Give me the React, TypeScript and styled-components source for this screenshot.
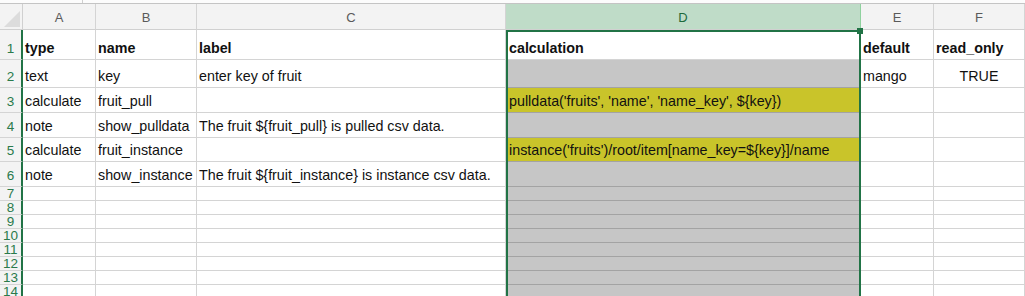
import styled, { createGlobalStyle } from "styled-components"

const GlobalStyle = createGlobalStyle`
  html, body { margin: 0; padding: 0; background: #ffffff; }
  body { font-family: "Liberation Sans", Arial, sans-serif; }
`

const GREEN = "#217346"
const WIDTHS = [23, 73, 101, 309, 355, 73, 91]
const SEL_COL = 4
const TEMPLATE = WIDTHS.map(w => `${w}px`).join(" ")

type Fill = "none" | "gray" | "yellow"

type RowData = { h: number; cells: string[]; bold?: boolean; fill?: Fill }

const rows: RowData[] = [
    { h: 30, bold: true, cells: ["type", "name", "label", "calculation", "default", "read_only"] },
    { h: 28, fill: "gray", cells: ["text", "key", "enter key of fruit", "", "mango", "TRUE"] },
    { h: 25, fill: "yellow", cells: ["calculate", "fruit_pull", "", "pulldata('fruits', 'name', 'name_key', ${key})", "", ""] },
    { h: 25, fill: "gray", cells: ["note", "show_pulldata", "The fruit ${fruit_pull} is pulled csv data.", "", "", ""] },
    { h: 24, fill: "yellow", cells: ["calculate", "fruit_instance", "", "instance('fruits')/root/item[name_key=${key}]/name", "", ""] },
    { h: 25, fill: "gray", cells: ["note", "show_instance", "The fruit ${fruit_instance} is instance csv data.", "", "", ""] },
    ...Array.from({ length: 8 }, () => ({ h: 14, fill: "gray" as Fill, cells: ["", "", "", "", "", ""] })),
]

export default function App() {
    const selLeft = WIDTHS.slice(0, SEL_COL).reduce((a, b) => a + b, 0)
    return (
        <>
            <GlobalStyle />
            <TopStrip>
                <StripDivider />
            </TopStrip>
            <Sheet>
                <Row $h={26}>
                    <Corner>
                        <svg width="16" height="16" viewBox="0 0 16 16">
                            <path d="M16 0 L16 16 L0 16 Z" fill="#dcdcdc" />
                        </svg>
                    </Corner>
                    {["A", "B", "C", "D", "E", "F"].map((l, i) => (
                        <ColHead key={l} $sel={i + 1 === SEL_COL}>{l}</ColHead>
                    ))}
                </Row>
                {rows.map((r, ri) => (
                    <Row key={ri} $h={r.h}>
                        <RowHead $small={r.h < 20}>{ri + 1}</RowHead>
                        {r.cells.map((c, ci) => {
                            const isSel = ci + 1 === SEL_COL
                            return (
                                <Cell
                                    key={ci}
                                    $bold={r.bold}
                                    $center={c === "TRUE"}
                                    $fill={isSel ? r.fill ?? "none" : "none"}
                                    $sel={isSel}
                                >
                                    {c}
                                </Cell>
                            )
                        })}
                    </Row>
                ))}
                <Selection style={{ left: selLeft, width: WIDTHS[SEL_COL] }}>
                    <Handle />
                </Selection>
            </Sheet>
        </>
    )
}

const TopStrip = styled.div`
    height: 3px;
    background: #fcfcfc;
    border-bottom: 1px solid #c4c4c4;
    position: relative;
`
const StripDivider = styled.div`
    position: absolute;
    left: 82px;
    top: 0;
    width: 1px;
    height: 3px;
    background: #cfcfcf;
`
const Sheet = styled.div`
    position: relative;
    width: 1025px;
    height: 292px;
    overflow: hidden;
`
const Row = styled.div<{ $h: number }>`
    display: grid;
    grid-template-columns: ${TEMPLATE};
    height: ${({ $h }) => $h}px;
`
const Corner = styled.div`
    background: #f3f3f3;
    border-right: 1px solid #d0d0d0;
    border-bottom: 1px solid #d0d0d0;
    display: flex;
    align-items: flex-end;
    justify-content: flex-end;
    padding: 0 2px 2px 0;
`
const ColHead = styled.div<{ $sel?: boolean }>`
    background: ${({ $sel }) => $sel ? "#bfdcc8" : "#f3f3f3"};
    color: ${({ $sel }) => $sel ? "#1c6a3c" : "#5a5a5a"};
    border-right: 1px solid ${({ $sel }) => $sel ? "#8fd19e" : "#d4d4d4"};
    border-bottom: 1px solid #d0d0d0;
    font-size: 13px;
    display: flex;
    align-items: center;
    justify-content: center;
    padding-top: 1px;
`
const RowHead = styled.div<{ $small?: boolean }>`
    background: #f3f3f3;
    color: #2a7a4b;
    border-right: 2px solid ${GREEN};
    border-bottom: 1px solid #d4d4d4;
    font-size: 13.5px;
    display: flex;
    align-items: ${({ $small }) => $small ? "center" : "flex-end"};
    justify-content: center;
    padding-bottom: ${({ $small }) => $small ? "0" : "4px"};
    line-height: 13px;
    overflow: visible;
`
const fills: Record<Fill, string> = {
    none: "#ffffff",
    gray: "#c6c6c6",
    yellow: "#c9c42a",
}
const Cell = styled.div<{ $bold?: boolean; $center?: boolean; $fill: Fill; $sel?: boolean }>`
    background: ${({ $fill }) => fills[$fill]};
    border-right: 1px solid #d4d4d4;
    border-bottom: 1px solid ${({ $sel, $fill }) => $sel && $fill !== "none" ? "#a3a3a3" : "#d4d4d4"};
    font-size: 14.3px;
    font-weight: ${({ $bold }) => $bold ? 700 : 400};
    color: #111;
    display: flex;
    align-items: flex-end;
    justify-content: ${({ $center }) => $center ? "center" : "flex-start"};
    padding: 0 2px 3px ${({ $sel }) => $sel ? "3px" : "2px"};
    white-space: nowrap;
    overflow: visible;
    line-height: 16px;
`
const Selection = styled.div`
    position: absolute;
    top: 26px;
    bottom: 0;
    border: 2px solid ${GREEN};
    border-bottom: none;
    box-sizing: border-box;
    pointer-events: none;
`
const Handle = styled.div`
    position: absolute;
    right: -4px;
    top: -4px;
    width: 6px;
    height: 6px;
    background: ${GREEN};
`
